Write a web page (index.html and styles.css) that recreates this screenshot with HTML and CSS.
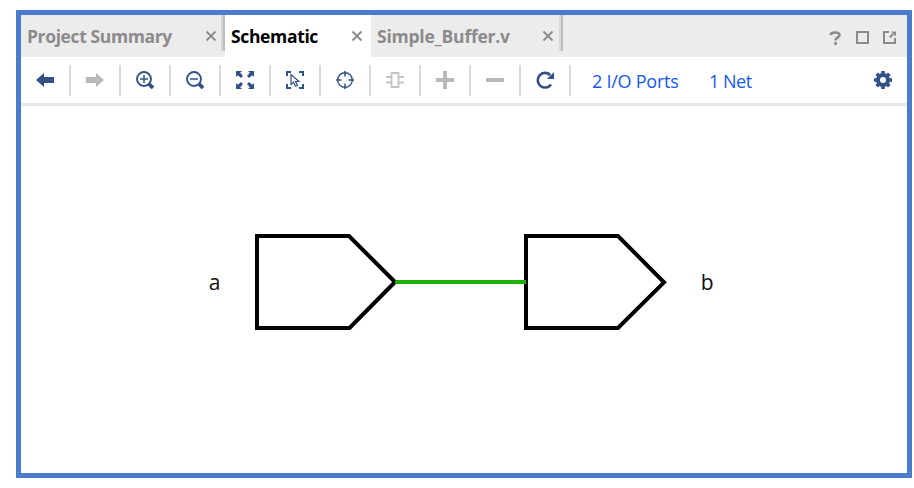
FILE: index.html
```html
<!DOCTYPE html>
<html lang="en">
<head>
<meta charset="utf-8">
<title>Schematic</title>
<link rel="stylesheet" href="styles.css">
</head>
<body>
<main class="window">
  <header class="tabs">
    <div class="tab tab-summary"><span class="tab-label label-summary">Project Summary</span><svg class="close" viewBox="0 0 12 12"><path d="M1.5 1.5l9 9M10.5 1.5l-9 9"/></svg></div>
    <div class="tab tab-schematic active"><span class="tab-label label-schematic">Schematic</span><svg class="close" viewBox="0 0 12 12"><path d="M1.5 1.5l9 9M10.5 1.5l-9 9"/></svg></div>
    <div class="tab tab-buffer"><span class="tab-label label-buffer">Simple_Buffer.v</span><svg class="close" viewBox="0 0 12 12"><path d="M1.5 1.5l9 9M10.5 1.5l-9 9"/></svg></div>
    <div class="window-tools">
      <svg width="13" height="14" viewBox="0 0 13 14"><path d="M1.5 4C2 2 3.800 1.500 6 1.500c3 0 4.500 1 4.500 2.700C10.500 6.500 6.500 6.300 6.500 9.500M6.500 11v3" fill="none" stroke="#8b8b8b" stroke-width="2.600"/></svg>
      <svg width="13" height="13" viewBox="0 0 13 13"><path d="M1 1h11v11H1z" fill="none" stroke="#8b8b8b" stroke-width="2"/></svg>
      <svg width="13" height="13" viewBox="0 0 13 13"><path d="M6 1H1v11h11V7M7 6.500L10 3" fill="none" stroke="#8b8b8b" stroke-width="2"/><path d="M8 .5h5v5z" fill="#8b8b8b"/></svg>
    </div>
  </header>
  <nav class="toolbar">
    <div class="tool"><svg viewBox="0 0 18 18"><path class="fill" d="M0 9l8-7v4h10v6H8v4z"/></svg></div>
    <div class="tool muted"><svg viewBox="0 0 18 18"><path class="fill" d="M18 9l-8-7v4H0v6h10v4z"/></svg></div>
    <div class="tool"><svg viewBox="0 0 18 18"><circle cx="8" cy="8" r="7" stroke-width="1.900"/><path d="M4 8h8M8 4v8" stroke-width="1.500"/><path d="M13 13l4 4" stroke-width="3.800"/></svg></div>
    <div class="tool"><svg viewBox="0 0 18 18"><circle cx="8" cy="8" r="7" stroke-width="1.900"/><path d="M4 8h8" stroke-width="1.500"/><path d="M13 13l4 4" stroke-width="3.800"/></svg></div>
    <div class="tool"><svg viewBox="0 0 18 18"><path class="fill" d="M0 0h6L4.200 1.800 7 5 5 7 1.800 4.200 0 6zM18 0v6l-1.800-1.800L13 7 11 5l2.800-3.200L12 0zM0 18v-6l1.800 1.800L5 11 7 13l-2.800 3.200L6 18zM18 18h-6l1.800-1.800L11 13l2-2 3.200 2.800L18 12z"/></svg></div>
    <div class="tool"><svg viewBox="0 0 18 18"><path d="M1 5V1h4M13 1h4v4M17 13v4h-4M5 17H1v-4" stroke-width="2"/><path d="M5 3.500v10l2.500-2.300 2 4.100 2-1-2-3.800H13z" stroke-width="1.200"/></svg></div>
    <div class="tool"><svg viewBox="0 0 18 18"><circle cx="9" cy="9" r="7.300" stroke-width="1.400"/><path d="M9 0v5.500M9 12.500V18M0 9h5.500M12.500 9H18" stroke-width="1.500"/></svg></div>
    <div class="tool pale"><svg viewBox="0 0 18 18"><path d="M5.500 2h7v14h-7zM0 6h5M0 11.500h5M13 6h5M13 11.500h5" stroke-width="1.800"/></svg></div>
    <div class="tool muted"><svg viewBox="0 0 18 18"><path d="M9 0v18M0 9h18" stroke-width="4"/></svg></div>
    <div class="tool muted"><svg viewBox="0 0 18 18"><path d="M0 9h18" stroke-width="4"/></svg></div>
    <div class="tool"><svg viewBox="0 0 18 18"><path d="M14.200 4A7.300 7.300 0 1 0 15 13.500" stroke-width="2.600"/><path class="fill" d="M18 1v7h-7z"/></svg></div>
    <a class="link link-ports">2 I/O Ports</a>
    <a class="link link-net">1 Net</a>
    <div class="settings"><svg viewBox="0 0 18 18"><path class="gear-teeth" d="M9 0v4M9 14v4M0 9h4M14 9h4M2.700 2.700l3 3M12.300 12.300l3 3M2.700 15.300l3-3M12.300 5.700l3-3"/><circle cx="9" cy="9" r="5" stroke-width="4"/></svg></div>
  </nav>
  <section class="canvas">
    <svg class="diagram" width="886" height="367" viewBox="21 106 886 367">
      <path class="port" d="M395 282L349 236H257V328H349.500L395 282"/>
      <path class="port" d="M526 236H618L664 282.300L618 328H526Z"/>
      <path class="net" d="M395.500 282H526"/>
      <text x="208.700" y="290">a</text>
      <text x="700.700" y="290">b</text>
    </svg>
  </section>
</main>
</body>
</html>
```
FILE: styles.css
```css
*, *::after { box-sizing: border-box; }
body { margin: 0; padding: 10px 2px 10px 16px; background: #fff; font-family: "Open Sans", "Noto Sans", sans-serif; }
.window { width: 896px; height: 468px; border: 5px solid #4a7ccd; background: #fff; }
svg { display: block; flex: none; }

.tabs { display: flex; height: 42px; background: #ececec; }
.tab { position: relative; display: flex; align-items: center; justify-content: space-between; padding: 0 8px 0 6px; color: #8b8b8b; }
.tab-summary { width: 204px; }
.tab-schematic { width: 146px; }
.tab-buffer { width: 192px; padding-right: 9px; }
.tab-summary::after, .tab-buffer::after { content: ""; position: absolute; top: 0; right: 0; width: 4px; height: 36px; border-left: 2px solid #d8d8d8; border-right: 2px solid #bdbdbd; }
.active { background: #fff; color: #000; }
.tab-label { font-size: 17.5px; font-weight: 700; line-height: 24px; white-space: nowrap; }
.label-summary { letter-spacing: -0.38px; }
.label-schematic { letter-spacing: -0.35px; }
.label-buffer { letter-spacing: -0.22px; }
.close { width: 12px; height: 12px; fill: none; stroke: #8b8b8b; stroke-width: 1.8; }
.window-tools { display: flex; align-items: center; gap: 14px; margin-left: auto; padding: 3px 11px 0 0; }

.toolbar { display: flex; align-items: center; height: 49px; border-bottom: 3px solid #e8e8e8; color: #325186; }
.tool { display: flex; align-items: center; justify-content: center; width: 50px; height: 31px; border-right: 2px solid #d9d9d9; }
.tool svg, .settings svg { width: 18px; height: 18px; fill: none; stroke: currentColor; }
.tool .fill { fill: currentColor; stroke: none; }
.tool.muted { color: #b9b9b9; }
.tool.pale { color: #c4c4c4; }
.link { font-size: 18px; line-height: 24px; padding-top: 1px; letter-spacing: -0.25px; color: #1457f5; white-space: nowrap; }
.link-ports { width: 117px; margin-left: 21px; }
.link-net { letter-spacing: -0.5px; }
.gear-teeth { stroke-width: 3.6; }
.settings { margin: 0 15px 0 auto; }

.canvas { height: 367px; }
.port { fill: none; stroke: #000; stroke-width: 4; }
.net { fill: none; stroke: #1cb100; stroke-width: 4; }
.diagram text { font-size: 21px; fill: #111; }
```
